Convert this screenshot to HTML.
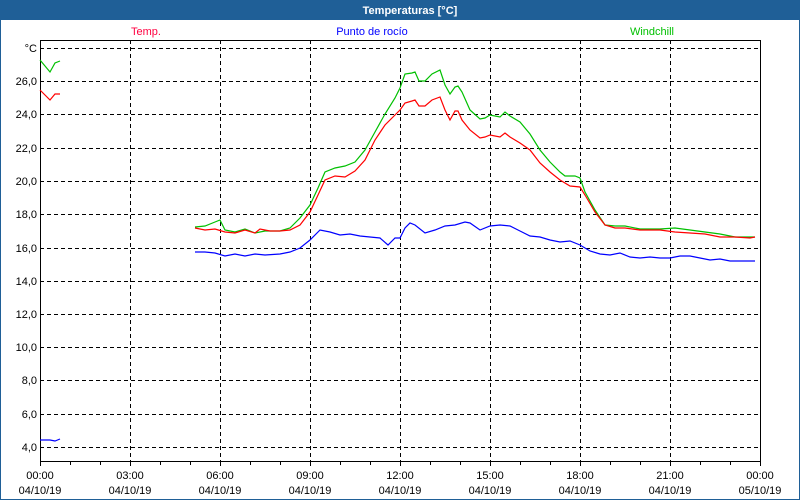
<!DOCTYPE html>
<html><head><meta charset="utf-8"><style>
html,body{margin:0;padding:0;background:#fff}
svg{display:block}
text{font-family:"Liberation Sans",sans-serif;font-size:11px}
</style></head><body>
<svg width="800" height="500" xmlns="http://www.w3.org/2000/svg">
<rect x="0" y="0" width="800" height="500" fill="#1f5f97"/>
<rect x="1" y="20" width="798" height="479" fill="#fff"/>
<text x="410" y="14" text-anchor="middle" fill="#fff" font-weight="bold">Temperaturas [°C]</text>
<text x="146" y="35" text-anchor="middle" fill="#ff0040">Temp.</text>
<text x="372" y="35" text-anchor="middle" fill="#0000ff">Punto de rocío</text>
<text x="652" y="35" text-anchor="middle" fill="#00c000">Windchill</text>
<g stroke="#000" stroke-width="1" stroke-dasharray="4,3" fill="none" shape-rendering="crispEdges">
<path d="M40 48.5H760M40 81.5H760M40 114.5H760M40 148.5H760M40 181.5H760M40 214.5H760M40 248.5H760M40 281.5H760M40 314.5H760M40 347.5H760M40 380.5H760M40 414.5H760M40 447.5H760"/>
<path d="M130.5 40V461M220.5 40V461M310.5 40V461M400.5 40V461M490.5 40V461M580.5 40V461M670.5 40V461"/>
</g>
<g stroke="#000" fill="none" shape-rendering="crispEdges">
<path d="M40.5 461V40.5H760.5V461"/>
<path d="M40 461.5H761"/>
<path d="M40.5 461v5M70.5 461v4M100.5 461v4M130.5 461v5M160.5 461v4M190.5 461v4M220.5 461v5M250.5 461v4M280.5 461v4M310.5 461v5M340.5 461v4M370.5 461v4M400.5 461v5M430.5 461v4M460.5 461v4M490.5 461v5M520.5 461v4M550.5 461v4M580.5 461v5M610.5 461v4M640.5 461v4M670.5 461v5M700.5 461v4M730.5 461v4M760.5 461v5"/>
</g>
<g fill="#000" text-anchor="end">
<text x="37" y="52">°C</text>
<text x="37" y="85">26,0</text><text x="37" y="118">24,0</text><text x="37" y="152">22,0</text>
<text x="37" y="185">20,0</text><text x="37" y="218">18,0</text><text x="37" y="252">16,0</text>
<text x="37" y="285">14,0</text><text x="37" y="318">12,0</text><text x="37" y="351">10,0</text>
<text x="37" y="384">8,0</text><text x="37" y="418">6,0</text><text x="37" y="451">4,0</text>
</g>
<g fill="#000" text-anchor="middle">
<text x="40" y="479">00:00</text><text x="40" y="494">04/10/19</text>
<text x="130" y="479">03:00</text><text x="130" y="494">04/10/19</text>
<text x="220" y="479">06:00</text><text x="220" y="494">04/10/19</text>
<text x="310" y="479">09:00</text><text x="310" y="494">04/10/19</text>
<text x="400" y="479">12:00</text><text x="400" y="494">04/10/19</text>
<text x="490" y="479">15:00</text><text x="490" y="494">04/10/19</text>
<text x="580" y="479">18:00</text><text x="580" y="494">04/10/19</text>
<text x="670" y="479">21:00</text><text x="670" y="494">04/10/19</text>
<text x="760" y="479">00:00</text><text x="760" y="494">05/10/19</text>
</g>
<g fill="none" stroke-width="1.2">
<polyline stroke="#00c000" points="40,60 50,72 55,63 60,61"/>
<polyline stroke="#ff0000" points="40,90 50,100 55,94 60,94"/>
<polyline stroke="#0000ff" points="40,440 50,440 55,441 60,439"/>
<polyline stroke="#00c000" points="195,227 205,226 215,222 220,220 225,230 235,232 245,229 255,233 265,231 280,231 290,228 300,218 310,205 318,188 325,172 335,168 345,166 355,162 365,150 375,132 385,114 395,98 400,88 405,74 412,73 415,72 419,81 425,81 432,74 440,70 445,85 450,94 455,87 458,86 462,92 470,110 480,119 485,118 490,115 500,117 505,112 510,116 520,122 530,134 540,150 550,162 560,172 565,176 575,176 580,178 585,192 595,210 605,225 615,226 625,226 640,229 660,229 675,228 690,230 705,232 720,234 735,237 750,237 755,237"/>
<polyline stroke="#ff0000" points="195,228 205,230 215,229 225,232 235,233 245,230 255,233 260,229 270,231 280,231 290,230 300,225 310,212 318,195 325,180 335,176 345,177 355,171 365,160 375,140 385,125 395,115 400,110 405,103 412,101 415,100 419,106 425,106 432,100 440,97 445,110 450,120 455,111 458,111 462,120 470,130 480,138 485,137 490,135 500,137 505,133 510,137 520,143 530,150 540,163 550,172 560,180 570,186 580,187 585,195 595,212 605,225 615,228 625,228 640,230 660,230 675,232 690,233 705,234 720,237 735,237 750,238 755,237"/>
<polyline stroke="#0000ff" points="195,252 205,252 215,253 225,256 235,254 245,256 255,254 265,255 280,254 290,252 300,248 310,240 320,230 330,232 340,235 350,234 360,236 370,237 380,238 388,245 395,238 400,238 405,228 410,223 415,225 425,233 435,230 445,226 455,225 465,222 470,223 480,230 490,226 500,225 510,226 520,231 530,236 540,237 550,240 560,242 570,241 580,245 590,251 600,254 610,255 620,253 630,257 640,258 650,257 660,258 670,258 680,256 690,256 700,258 710,260 720,259 730,261 740,261 755,261"/>
</g>
</svg>
</body></html>
